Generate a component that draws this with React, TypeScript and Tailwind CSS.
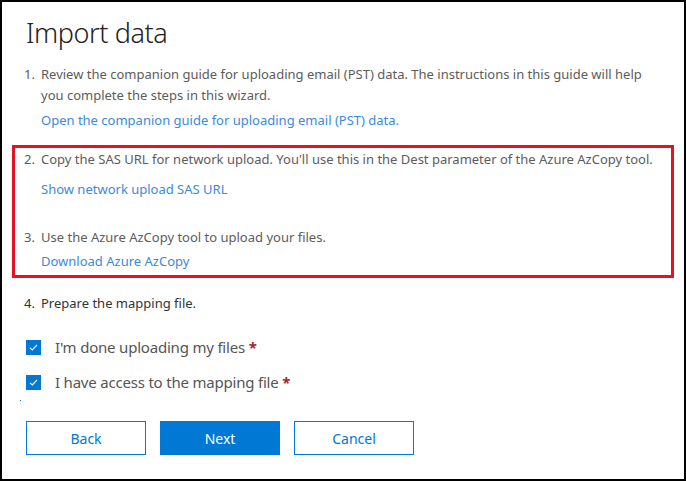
import React from 'react';

const font = { fontFamily: '"Noto Sans", "Open Sans", sans-serif' };

function Step({ n, children }: { n: string; children: React.ReactNode }) {
  return (
    <div className="flex text-[13px] leading-[21px] text-[#5c5c5c]">
      <span className="w-[17px] shrink-0">{n}</span>
      <div>{children}</div>
    </div>
  );
}

function Check({ label }: { label: string }) {
  return (
    <div className="flex items-center h-[35px]">
      <span className="w-[15px] h-[15px] bg-[#0078d4] flex items-center justify-center">
        <svg width="11" height="11" viewBox="0 0 11 11" fill="none">
          <path d="M2 5.8 L4.3 8 L9 3" stroke="white" strokeWidth="1.1" />
        </svg>
      </span>
      <span className="ml-[14px] text-[15px] tracking-[-0.2px] text-[#555]">
        {label} <span className="text-[#a4262c] font-bold">*</span>
      </span>
    </div>
  );
}

export default function App() {
  return (
    <div style={font} className="w-[686px] h-[481px] border-2 border-black bg-white overflow-hidden">
      <h1 className="pl-[24px] pt-[12px] text-[27px] font-light leading-[38px] tracking-[-0.4px] text-[#222]">
        Import data
      </h1>

      <div className="pl-[22px] pr-[20px] mt-[12px]">
        <Step n="1.">
          <p>
            Review the companion guide for uploading email (PST) data. The instructions in this guide will help
            you complete the steps in this wizard.
          </p>
          <p className="mt-[4px] text-[#3b8ad8]">Open the companion guide for uploading email (PST) data.</p>
        </Step>
      </div>

      <div className="mx-[10px] mt-[14px] border-[3px] border-[#e81123] pl-[9px] pt-[1px] h-[133px]">
        <Step n="2.">
          <p>Copy the SAS URL for network upload. You'll use this in the Dest parameter of the Azure AzCopy tool.</p>
          <p className="mt-[9px] text-[#3b8ad8]">Show network upload SAS URL</p>
        </Step>
        <div className="mt-[27px]">
          <Step n="3.">
            <p>Use the Azure AzCopy tool to upload your files.</p>
            <p className="mt-[3px] text-[#3b8ad8]">Download Azure AzCopy</p>
          </Step>
        </div>
      </div>

      <div className="pl-[22px] mt-[15px] flex text-[13px] leading-[20px] text-[#333]">
        <span className="w-[17px]">4.</span>
        <span>Prepare the mapping file.</span>
      </div>

      <div className="pl-[24px] mt-[17px]">
        <Check label="I'm done uploading my files" />
        <Check label="I have access to the mapping file" />
      </div>

      <div className="pl-[18px] h-[3px]">
        <span className="block w-[1px] h-[1px] bg-[#0078d4]" />
      </div>

      <div className="pl-[24px] mt-[18px] flex gap-[14px] text-[14px]">
        <button className="w-[120px] h-[34px] border border-[#0078d4] text-[#0078d4] bg-white">Back</button>
        <button className="w-[120px] h-[34px] border border-[#0078d4] text-white bg-[#0078d4]">Next</button>
        <button className="w-[120px] h-[34px] border border-[#0078d4] text-[#0078d4] bg-white">Cancel</button>
      </div>
    </div>
  );
}
